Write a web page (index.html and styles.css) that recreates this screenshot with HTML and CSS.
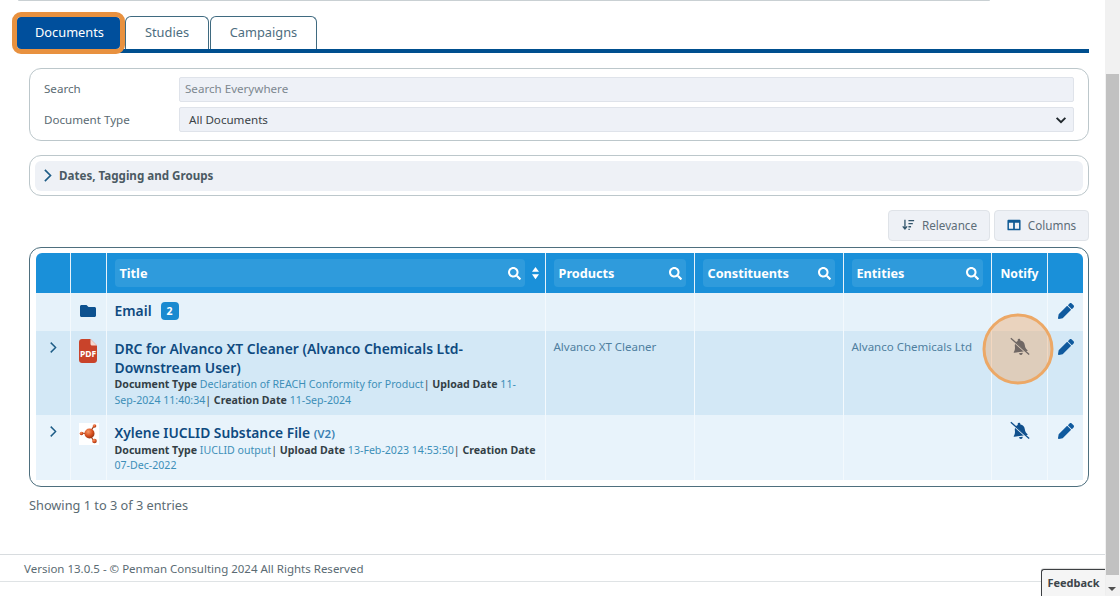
FILE: index.html
```html
<!DOCTYPE html>
<html lang="en">
<head>
<meta charset="utf-8">
<title>Documents</title>
<link rel="stylesheet" href="styles.css">
</head>
<body>
<svg class="defs" aria-hidden="true">
  <symbol id="i-search" viewBox="0 0 512 512"><path d="M505 442.7L405.3 343c-4.5-4.5-10.6-7-17-7H372c27.6-35.3 44-79.7 44-128C416 93.1 322.9 0 208 0S0 93.1 0 208s93.1 208 208 208c48.3 0 92.7-16.4 128-44v16.3c0 6.4 2.5 12.5 7 17l99.7 99.7c9.4 9.4 24.6 9.4 33.9 0l28.3-28.3c9.4-9.4 9.4-24.6.1-34zM208 336c-70.7 0-128-57.2-128-128 0-70.7 57.2-128 128-128 70.7 0 128 57.2 128 128 0 70.7-57.2 128-128 128z"/></symbol>
  <symbol id="i-pencil" viewBox="0 0 512 512"><path d="M497.9 142.1l-46.1 46.1c-4.7 4.7-12.3 4.7-17 0l-111-111c-4.7-4.7-4.7-12.3 0-17l46.1-46.1c18.7-18.7 49.1-18.7 67.9 0l60.1 60.1c18.8 18.7 18.8 49.1 0 67.9zM284.2 99.8L21.6 362.4.4 483.9c-2.9 16.4 11.4 30.6 27.8 27.8l121.5-21.3 262.6-262.6c4.7-4.7 4.7-12.3 0-17l-111-111c-4.8-4.7-12.4-4.7-17.1 0z"/></symbol>
  <symbol id="i-folder" viewBox="0 0 512 512"><path d="M464 128H272l-64-64H48C21.49 64 0 85.49 0 112v288c0 26.51 21.49 48 48 48h416c26.51 0 48-21.49 48-48V176c0-26.51-21.49-48-48-48z"/></symbol>
  <symbol id="i-bell" viewBox="0 0 24 24">
    <path class="bell-shape" d="M12 2c-1 0-1.600.7-1.600 1.600v.8C7.500 5.100 6 7.600 6 10.300c0 3.600-1 5.200-2.200 6.500-.5.500-.1 1.200.5 1.200h15.400c.6 0 1-.7.500-1.200-1.200-1.300-2.200-2.900-2.200-6.500 0-2.700-1.500-5.200-4.400-5.900v-.8C13.600 2.700 13 2 12 2zM9.800 19.300c0 1.300 1 2.300 2.200 2.300s2.200-1 2.200-2.300z" transform="rotate(-8 12 12)"/>
    <path class="slash-halo" d="M1 2.500L23 22"/>
    <path class="slash" d="M1 1.500L23 21"/>
  </symbol>
  <symbol id="i-chev" viewBox="0 0 12 20"><path class="chev" d="M2.500 2.500L10 10l-7.500 7.500"/></symbol>
</svg>

<main class="page">
  <div class="top-remnant"></div>

  <nav class="tabs">
    <a class="tab tab-active">Documents</a>
    <a class="tab tab-studies">Studies</a>
    <a class="tab tab-campaigns">Campaigns</a>
  </nav>

  <section class="card filters">
    <div class="field">
      <label class="field-label">Search</label>
      <div class="control placeholder">Search Everywhere</div>
    </div>
    <div class="field">
      <label class="field-label">Document Type</label>
      <div class="control select">All Documents
        <svg class="select-caret" viewBox="0 0 16 16"><path d="M3 5.500L8 10.500l5-5"/></svg>
      </div>
    </div>
  </section>

  <section class="card accordion">
    <div class="accordion-head">
      <svg class="accordion-chev"><use href="#i-chev"/></svg>
      <span>Dates, Tagging and Groups</span>
    </div>
  </section>

  <div class="toolbar">
    <button class="tool-btn btn-relevance">
      <svg class="tool-icon" viewBox="0 0 16 16"><path d="M4.500 2v10M2 9.500l2.500 3 2.500-3" class="sort-line"/><path d="M8.500 3h6.500M8.500 6.500h5M8.500 10h3M8.500 13h1.500" class="sort-line"/></svg>
      Relevance
    </button>
    <button class="tool-btn btn-columns">
      <svg class="tool-icon" viewBox="0 0 16 16"><path class="cols" fill-rule="evenodd" d="M1.500 2h13c.6 0 1 .4 1 1v10c0 .6-.4 1-1 1h-13c-.6 0-1-.4-1-1V3c0-.6.4-1 1-1zM2.200 5.500v6.800h4.800V5.500zM9 5.500v6.800h4.800V5.500z"/></svg>
      Columns
    </button>
  </div>

  <section class="table-frame">
    <table class="docs">
      <colgroup>
        <col class="c-exp"><col class="c-ico"><col class="c-title"><col class="c-prod"><col class="c-cons"><col class="c-ent"><col class="c-not"><col class="c-edit">
      </colgroup>
      <thead>
        <tr>
          <th></th>
          <th></th>
          <th>
            <div class="th-with-sort">
              <div class="th-box">Title<svg class="th-search"><use href="#i-search"/></svg></div>
              <svg class="sort" viewBox="0 0 10 16"><path d="M5 1l4 5.500H1zM5 15l-4-5.500h8z"/></svg>
            </div>
          </th>
          <th><div class="th-box">Products<svg class="th-search"><use href="#i-search"/></svg></div></th>
          <th><div class="th-box">Constituents<svg class="th-search"><use href="#i-search"/></svg></div></th>
          <th><div class="th-box">Entities<svg class="th-search"><use href="#i-search"/></svg></div></th>
          <th class="th-plain">Notify</th>
          <th></th>
        </tr>
      </thead>
      <tbody>
        <tr class="row-email">
          <td></td>
          <td class="center"><svg class="folder"><use href="#i-folder"/></svg></td>
          <td><span class="doc-title">Email</span><span class="badge">2</span></td>
          <td></td><td></td><td></td><td></td>
          <td class="center"><svg class="pencil"><use href="#i-pencil"/></svg></td>
        </tr>
        <tr class="row-drc">
          <td class="center"><svg class="row-chev"><use href="#i-chev"/></svg></td>
          <td class="center">
            <svg class="pdf" viewBox="0 0 18 24">
              <path class="pdf-body" d="M3 0h8.500L18 6.500V21c0 1.700-1.300 3-3 3H3c-1.700 0-3-1.300-3-3V3c0-1.700 1.300-3 3-3z"/>
              <path class="pdf-fold" d="M11.500 0v5c0 .8.700 1.500 1.500 1.500h5z"/>
              <text class="pdf-text" x="9" y="17.500">PDF</text>
            </svg>
          </td>
          <td>
            <div class="doc-title">DRC for Alvanco XT Cleaner (Alvanco Chemicals Ltd-Downstream User)</div>
            <div class="meta"><b>Document Type</b> <span class="link">Declaration of REACH Conformity for Product</span>| <b>Upload Date</b> <span class="link">11-Sep-2024 11:40:34</span>| <b>Creation Date</b> <span class="link">11-Sep-2024</span></div>
          </td>
          <td class="plain-cell">Alvanco XT Cleaner</td>
          <td></td>
          <td class="plain-cell">Alvanco Chemicals Ltd</td>
          <td class="center">
            <span class="bell-wrap">
              <svg class="bell bell-muted"><use href="#i-bell"/></svg>
              <span class="spotlight"></span>
            </span>
          </td>
          <td class="center"><svg class="pencil"><use href="#i-pencil"/></svg></td>
        </tr>
        <tr class="row-xylene">
          <td class="center"><svg class="row-chev"><use href="#i-chev"/></svg></td>
          <td class="center">
            <svg class="molecule" viewBox="0 0 20 22">
              <defs><radialGradient id="ball" cx=".38" cy=".32" r=".75"><stop offset="0" stop-color="#f59a6a"/><stop offset=".55" stop-color="#d9501f"/><stop offset="1" stop-color="#8e2f10"/></radialGradient></defs>
              <rect class="mol-bg" width="20" height="22"/>
              <path class="mol-bond" d="M10 11L3 10M10 11L15 3M10 11L15 18"/>
              <circle cx="10.500" cy="10.500" r="5" fill="url(#ball)"/>
              <circle cx="2.500" cy="10.500" r="1.800" fill="url(#ball)"/>
              <circle cx="15.500" cy="3" r="1.800" fill="url(#ball)"/>
              <circle cx="15.500" cy="18" r="2.300" fill="url(#ball)"/>
            </svg>
          </td>
          <td>
            <div class="doc-title">Xylene IUCLID Substance File <span class="version">(V2)</span></div>
            <div class="meta"><b>Document Type</b> <span class="link">IUCLID output</span>| <b>Upload Date</b> <span class="link">13-Feb-2023 14:53:50</span>| <b>Creation Date</b> <span class="link">07-Dec-2022</span></div>
          </td>
          <td></td><td></td><td></td>
          <td class="center"><span class="bell-wrap"><svg class="bell"><use href="#i-bell"/></svg></span></td>
          <td class="center"><svg class="pencil"><use href="#i-pencil"/></svg></td>
        </tr>
      </tbody>
    </table>
  </section>

  <p class="entries">Showing 1 to 3 of 3 entries</p>

  <footer class="footer">
    <span>Version 13.0.5 - © Penman Consulting 2024 All Rights Reserved</span>
  </footer>
  <div class="feedback">Feedback</div>
</main>

<aside class="scrollbar">
  <div class="thumb"></div>
</aside>
<span class="scroll-arrow"></span>
</body>
</html>
```

FILE: styles.css
```css
* { box-sizing: border-box; }
html, body { margin: 0; height: 596px; overflow: hidden; }
body {
  display: flex;
  background: #fff;
  font-family: "Noto Sans", "Open Sans", sans-serif;
  color: #5b6b73;
  font-size: 13px;
}
.defs { width: 0; height: 0; position: absolute; }

.page { position: relative; width: 1105px; height: 596px; flex: none; }
.scrollbar { width: 15px; height: 596px; background: #f1f1f1; flex: none; padding-top: 74px; }
.thumb { height: 501px; background: #c1c1c1; margin: 0 1px 0 1px; }
.scroll-arrow {
  position: absolute; right: 4px; bottom: 5px; width: 0; height: 0;
  border-left: 4px solid transparent; border-right: 4px solid transparent; border-top: 4px solid #505050;
}

.top-remnant {
  height: 1px; margin: 0 115px 0 18px;
  background: #c9d0d3; border-radius: 0 0 4px 4px;
}

.tabs {
  display: flex; align-items: flex-end; gap: 1px;
  height: 52px; margin: 0 16px 0 17px; padding-top: 15px;
  border-bottom: 4px solid #004f8f;
}
.tab {
  height: 33px; line-height: 31px; text-align: center; font-size: 12.800px;
  color: #4d6d80; background: #fff;
  border: 1px solid #3f6a80; border-bottom: 0; border-radius: 6px 6px 0 0;
}
.tab-active {
  width: 103px; margin-right: 4px; height: 32px; color: #fff; background: #004f9c; border-color: #004f9c;
  border-radius: 4px; outline: 5px solid #e8913f; outline-offset: 0; position: relative; z-index: 2;
  line-height: 29px; padding-left: 2px;
}
.tab-studies { width: 84px; }
.tab-campaigns { width: 107px; }

.card {
  margin: 0 16px 0 29px;
  border: 1px solid #bcc7cb;
  border-radius: 12px;
  background: #fff;
}
.filters {
  margin-top: 15px; height: 73px; padding: 8px 14px 0;
  display: flex; flex-direction: column; gap: 5px;
}
.field { display: flex; align-items: center; height: 25px; }
.field-label { width: 135px; flex: none; font-size: 11.600px; color: #5b6b73; padding-bottom: 2px; }
.field + .field .field-label { padding: 0; }
.control {
  flex: 1; height: 25px; line-height: 22px; background: #eef1f7;
  border: 1px solid #dfe3ea; border-radius: 2px; font-size: 11.600px; color: #3a4348;
}
.placeholder { padding-left: 5px; color: #7d8890; }
.select { padding-left: 9px; position: relative; line-height: 23px; }
.select-caret {
  position: absolute; right: 5px; top: 5px; width: 14px; height: 14px;
  fill: none; stroke: #20282c; stroke-width: 2.200;
}

.accordion { margin-top: 14px; height: 41px; padding: 5px; }
.accordion-head {
  height: 30px; background: #eef1f6; border-radius: 6px;
  display: flex; align-items: center; gap: 7px; padding: 0 0 2px 8px;
  font-weight: 700; font-size: 11.600px; color: #4b5a63;
}
.accordion-chev { width: 9px; height: 15px; }
.chev { fill: none; stroke: #1d5c86; stroke-width: 2.200; }

.toolbar { display: flex; justify-content: flex-end; gap: 4px; margin: 14px 16px 0 0; }
.tool-btn {
  height: 31px; display: flex; align-items: center; justify-content: center; gap: 7px;
  padding: 0 0 2px;
  background: #eef1f6; border: 1px solid #dfe3e8; border-radius: 4px;
  font: 11.700px "Noto Sans", sans-serif; color: #5d6d78;
}
.btn-relevance { width: 102px; }
.btn-columns { width: 95px; }
.tool-icon { width: 14px; height: 14px; }
.sort-line { fill: none; stroke: #33566c; stroke-width: 1.500; }
.cols { fill: #0f5a94; }

.table-frame {
  margin: 6px 16px 0 29px; height: 240px; padding: 5px 5px 5px 6px;
  border: 1px solid #4e6f7e; border-radius: 12px;
}
.docs { width: 1047px; border-collapse: collapse; table-layout: fixed; }
.c-exp { width: 34px; } .c-ico { width: 36px; } .c-title { width: 439px; }
.c-prod { width: 149px; } .c-cons { width: 149px; } .c-ent { width: 148px; }
.c-not { width: 56px; } .c-edit { width: 36px; }

.docs thead tr { height: 40px; background: #1a90d9; }
.docs thead th:first-child { border-top-left-radius: 6px; }
.docs thead th:last-child { border-top-right-radius: 6px; }
.docs th {
  padding: 6px 8px; color: #fff; font-weight: 700; font-size: 12.500px; text-align: left;
  border-left: 1px solid #e6f2fa;
}
.docs th:first-child, .docs td:first-child { border-left: 0; }
.docs .th-plain { text-align: center; padding: 0 0 0 1px; font-size: 12.200px; }
.th-box {
  height: 28px; background: #2f9bdc; border-radius: 4px; padding: 0 4px 0 5px;
  display: flex; align-items: center; justify-content: space-between;
  font-size: 12.700px;
}
.th-with-sort { display: flex; align-items: center; gap: 6px; margin-right: -3px; }
.th-with-sort .th-box { flex: 1; }
.th-search { width: 13px; height: 13px; fill: #fff; }
.sort { width: 9px; height: 14px; fill: #fff; flex: none; }

.docs td { vertical-align: top; border-left: 1px solid #f3f9fd; padding: 0; }
.row-email { height: 38px; background: #e6f2fa; }
.row-drc { height: 84px; background: #d3e8f6; }
.row-xylene { height: 65px; background: #e8f3fb; }
.row-drc td, .row-xylene td { padding: 9px 7px 0 8px; }
.row-drc td.center, .row-xylene td.center { padding-top: 8px; }
.docs td.center { text-align: center; padding-left: 0; padding-right: 0; }
.row-email td { vertical-align: middle; padding: 0 7px 2px 8px; }
.row-email .pencil { margin-top: -1px; }

.doc-title { font-size: 13.900px; font-weight: 600; line-height: 18.500px; color: #0e4a80; }
.row-xylene .doc-title { font-size: 13.800px; }
.version { font-size: 11.500px; color: #3a7fb2; }
.badge {
  display: inline-block; margin-left: 9px; width: 18px; height: 18px; line-height: 18px;
  text-align: center; border-radius: 4px; background: #1a8ad0; color: #fff;
  font-size: 10.500px; font-weight: 700; vertical-align: 1px;
}
.meta { margin-top: 0; font-size: 10.600px; line-height: 15.500px; color: #3d4a52; }
.row-xylene .meta { margin-top: -1px; }
.meta b { font-weight: 700; color: #333f46; }
.link { color: #3d8fb8; }
.docs td.plain-cell { font-size: 11.500px; color: #4f7f9f; padding-top: 8px; }

.folder { width: 16px; height: 16px; fill: #0c518f; display: block; margin: 0 auto; }
.pencil { width: 16px; height: 16px; fill: #0f5a9e; display: block; margin-left: 10px; }
.row-chev { width: 8px; height: 13px; margin-top: 2px; }
.pdf { width: 18px; height: 24px; display: block; margin: 0 auto; }
.pdf-body { fill: #c9432a; }
.pdf-fold { fill: #f4d8d0; }
.pdf-text { fill: #fff; font-size: 8.500px; font-weight: 700; text-anchor: middle; font-family: "Noto Sans", sans-serif; }
.molecule { width: 20px; height: 22px; display: block; margin-left: 8.500px; }
.mol-bg { fill: #fff; }
.mol-bond { stroke: #9a3a15; stroke-width: 1.200; fill: none; }

.bell-wrap { position: relative; display: block; width: 20px; height: 20px; margin: -2px 0 0 18px; }
.bell { width: 20px; height: 20px; fill: #0f4f8c; color: #e8f3fb; stroke: #0f4f8c; display: block; }
.bell-shape { stroke: none; }
.slash { fill: none; stroke-width: 1.600; }
.slash-halo { fill: none; stroke: currentColor; stroke-width: 2; }
.bell-muted { fill: #1b3f64; stroke: #1b3f64; color: #d3e8f6; }
.spotlight {
  position: absolute; left: calc(50% - 2px); top: calc(50% + 2px); width: 71px; height: 71px;
  transform: translate(-50%, -50%); border-radius: 50%;
  border: 3px solid #eca866; background: rgba(240, 165, 100, .4); z-index: 3;
}

.entries { margin: 9px 0 0 29px; font-size: 12.750px; line-height: 19px; color: #5b6b73; }

.footer {
  position: absolute; left: 0; right: 0; top: 554px; height: 28px; padding-left: 24px;
  border-top: 1px solid #d8dcdf; border-bottom: 1px solid #dfe3e5;
  font-size: 11.500px; line-height: 27px; color: #5b6b73;
}
.feedback {
  position: absolute; right: 0; top: 569px; width: 64px; height: 27px;
  background: #f5f5f5; border: 1px solid #3c3f42; border-right: 0; border-bottom: 0; border-radius: 3px 0 0 0;
  box-shadow: 0 -1px 1px rgba(0,0,0,.15);
  text-align: center; font-size: 11px; font-weight: 700; line-height: 25px; color: #3e464b;
}
```
